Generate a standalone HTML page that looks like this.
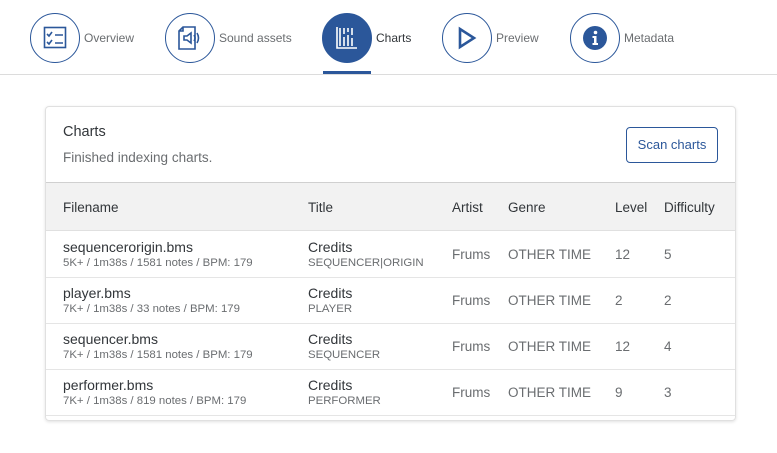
<!DOCTYPE html>
<html><head><meta charset="utf-8"><style>
*{margin:0;padding:0;box-sizing:border-box}
body{width:777px;height:453px;background:#fff;font-family:"Liberation Sans",sans-serif;position:relative;overflow:hidden;color:#32363a}
.a{position:absolute;white-space:nowrap}
.c{position:absolute;top:13px;width:50px;height:50px;border:1.3px solid #2b579a;border-radius:50%;background:#fff}
.c svg{position:absolute;left:0;top:0}
.lab{position:absolute;top:31px;font-size:12px;color:#6a6d70}
.hdr{font-size:13.5px;color:#32363a}
.cell{font-size:13.5px;color:#6a6d70}
.m{font-size:14px;color:#32363a}
.s{font-size:11.4px;color:#6a6d70}
</style></head><body>
<div class="a" style="left:0;top:74px;width:777px;height:1px;background:#dcdcdc"></div>
<div class="c" style="left:30px"><svg width="48" height="48" viewBox="0 0 48 48" fill="none" stroke="#2b579a" stroke-width="1.6"><rect x="13.5" y="13.5" width="21" height="20"/><path d="M16 20l2 2 3-4M16 28l2 2 3-4M24 21h8M24 29h8"/></svg></div>
<div class="lab" style="left:84px">Overview</div>
<div class="c" style="left:165px"><svg width="48" height="48" viewBox="0 0 48 48" fill="none" stroke="#2b579a" stroke-width="1.6"><path d="M17 13h12v22H13V17z M13 17h4v-4"/><path d="M18 22h3l4-3v10l-4-3h-3z M28 21q2 3 0 6M31 19q3 5 0 10"/></svg></div>
<div class="lab" style="left:219px">Sound assets</div>
<div class="c" style="left:322px;background:#2b579a"><svg width="48" height="48" viewBox="0 0 48 48" fill="none" stroke="#fff" stroke-width="1.6"><path d="M14 13v21h20M17 14v18M21 14v6M21 23v9M25 14v4M25 21v11M29 14v7M29 24v8"/></svg></div>
<div class="a" style="left:323px;top:71px;width:48px;height:3px;background:#2b579a"></div>
<div class="lab" style="left:376px;color:#32363a">Charts</div>
<div class="c" style="left:442px"><svg width="48" height="48" viewBox="0 0 48 48" fill="none" stroke="#2b579a" stroke-width="2.6"><path d="M17 15v18l14-9z"/></svg></div>
<div class="lab" style="left:496px">Preview</div>
<div class="c" style="left:570px"><svg width="48" height="48" viewBox="0 0 48 48"><circle cx="24" cy="24" r="12" fill="#2b579a"/><circle cx="24.5" cy="18.5" r="1.8" fill="#fff"/><path d="M21.5 22h4v7h1.5v2h-5.5v-2h1.5v-5h-1.5z" fill="#fff"/></svg></div>
<div class="lab" style="left:624px">Metadata</div>

<div class="a" style="left:45px;top:106px;width:691px;height:315px;border:1px solid #e0e0e0;border-radius:4px;box-shadow:0 1px 3px rgba(0,0,0,.12)"></div>
<div class="a" style="left:63px;top:124px;font-size:14.5px">Charts</div>
<div class="a" style="left:63px;top:150px;font-size:13.5px;color:#6a6d70">Finished indexing charts.</div>
<div class="a" style="left:626px;top:127px;width:92px;height:36px;border:1px solid #2b579a;border-radius:4px;color:#2b579a;font-size:13px;text-align:center;line-height:34px">Scan charts</div>
<div class="a" style="left:46px;top:182px;width:689px;height:49px;background:#f2f2f2;border-top:1px solid #d0d0d0;border-bottom:1px solid #e0e0e0"></div>
<div class="a hdr" style="left:63px;top:200px">Filename</div>
<div class="a hdr" style="left:308px;top:200px">Title</div>
<div class="a hdr" style="left:452px;top:200px">Artist</div>
<div class="a hdr" style="left:508px;top:200px">Genre</div>
<div class="a hdr" style="left:615px;top:200px">Level</div>
<div class="a hdr" style="left:664px;top:200px">Difficulty</div>

<div class="a" style="left:46px;top:277px;width:689px;height:1px;background:#e5e5e5"></div>
<div class="a" style="left:46px;top:323px;width:689px;height:1px;background:#e5e5e5"></div>
<div class="a" style="left:46px;top:369px;width:689px;height:1px;background:#e5e5e5"></div>
<div class="a" style="left:46px;top:415px;width:689px;height:1px;background:#e5e5e5"></div>

<div class="a m" style="left:63px;top:239px">sequencerorigin.bms</div><div class="a s" style="left:63px;top:257px">5K+ / 1m38s / 1581 notes / BPM: 179</div>
<div class="a m" style="left:308px;top:239px">Credits</div><div class="a s" style="left:308px;top:257px">SEQUENCER|ORIGIN</div>
<div class="a cell" style="left:452px;top:247px">Frums</div><div class="a cell" style="left:508px;top:247px">OTHER TIME</div><div class="a cell" style="left:615px;top:247px">12</div><div class="a cell" style="left:664px;top:247px">5</div>

<div class="a m" style="left:63px;top:285px">player.bms</div><div class="a s" style="left:63px;top:303px">7K+ / 1m38s / 33 notes / BPM: 179</div>
<div class="a m" style="left:308px;top:285px">Credits</div><div class="a s" style="left:308px;top:303px">PLAYER</div>
<div class="a cell" style="left:452px;top:293px">Frums</div><div class="a cell" style="left:508px;top:293px">OTHER TIME</div><div class="a cell" style="left:615px;top:293px">2</div><div class="a cell" style="left:664px;top:293px">2</div>

<div class="a m" style="left:63px;top:331px">sequencer.bms</div><div class="a s" style="left:63px;top:349px">7K+ / 1m38s / 1581 notes / BPM: 179</div>
<div class="a m" style="left:308px;top:331px">Credits</div><div class="a s" style="left:308px;top:349px">SEQUENCER</div>
<div class="a cell" style="left:452px;top:339px">Frums</div><div class="a cell" style="left:508px;top:339px">OTHER TIME</div><div class="a cell" style="left:615px;top:339px">12</div><div class="a cell" style="left:664px;top:339px">4</div>

<div class="a m" style="left:63px;top:377px">performer.bms</div><div class="a s" style="left:63px;top:395px">7K+ / 1m38s / 819 notes / BPM: 179</div>
<div class="a m" style="left:308px;top:377px">Credits</div><div class="a s" style="left:308px;top:395px">PERFORMER</div>
<div class="a cell" style="left:452px;top:385px">Frums</div><div class="a cell" style="left:508px;top:385px">OTHER TIME</div><div class="a cell" style="left:615px;top:385px">9</div><div class="a cell" style="left:664px;top:385px">3</div>
</body></html>
